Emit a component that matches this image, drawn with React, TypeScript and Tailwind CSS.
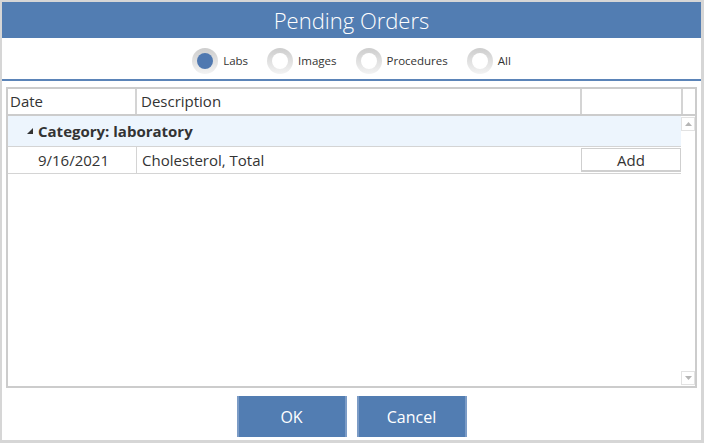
import React from "react";

const font = { fontFamily: '"Open Sans", "Noto Sans", sans-serif' };

type Filter = "Labs" | "Images" | "Procedures" | "All";

function Radio({ label, checked }: { label: Filter; checked?: boolean }) {
  return (
    <label className="flex items-center gap-[5px] text-[11.5px] text-[#333]">
      <span className="flex h-[26px] w-[26px] items-center justify-center rounded-full bg-gradient-to-b from-[#cdcdcd] to-[#f3f3f3]">
        <span
          className={`h-[16px] w-[16px] rounded-full ${
            checked ? "bg-[#4f78b0]" : "bg-white"
          }`}
        />
      </span>
      {label}
    </label>
  );
}

function ScrollArrow({ up }: { up?: boolean }) {
  return (
    <div className="flex h-[14px] w-[14px] items-center justify-center border border-[#e2e2e2] bg-white">
      <svg width="7" height="4" viewBox="0 0 7 4">
        <path d={up ? "M0 4 L3.5 0 L7 4 Z" : "M0 0 L3.5 4 L7 0 Z"} fill="#b5b5b5" />
      </svg>
    </div>
  );
}

export default function App() {
  const filters: Filter[] = ["Labs", "Images", "Procedures", "All"];
  return (
    <div
      className="h-[443px] w-[704px] border-t-2 border-l-2 border-r-[3px] border-b-[3px] border-[#d6d6d6] bg-white flex flex-col"
      style={font}
    >
      {/* Title bar */}
      <div className="flex h-[36px] items-center justify-center bg-[#527db2] text-[22px] font-light text-white">
        Pending Orders
      </div>

      {/* Filter radios */}
      <div className="flex h-[43px] items-center justify-center gap-[19px] border-b-2 border-[#5b84b8] pt-[4px]">
        {filters.map(f => (
          <Radio key={f} label={f} checked={f === "Labs"} />
        ))}
      </div>

      {/* Grid */}
      <div className="mx-[4px] mt-[6px] flex h-[301px] flex-col border-2 border-[#cccccc]">
        <div className="flex h-[27px] border-b-2 border-[#cccccc] text-[15px] text-[#333]">
          <div className="flex w-[129px] items-center border-r-2 border-[#d4d4d4] pl-[2px]">Date</div>
          <div className="flex w-[445px] items-center border-r-2 border-[#d4d4d4] pl-[4px]">Description</div>
          <div className="w-[101px] border-r-2 border-[#d4d4d4]" />
          <div className="flex-1" />
        </div>
        <div className="flex flex-1">
          <div className="flex flex-1 flex-col">
            <div className="flex h-[31px] items-center gap-[5px] border-b border-[#d4d4d4] bg-[#edf5fd] pl-[19px] text-[15px] font-bold text-[#333]">
              <svg width="6" height="6" viewBox="0 0 6 6">
                <path d="M6 0 L6 6 L0 6 Z" fill="#333" />
              </svg>
              Category: laboratory
            </div>
            <div className="flex h-[27px] border-b border-[#d4d4d4] text-[15px] text-[#333]">
              <div className="flex w-[129px] items-center justify-end border-r border-[#d4d4d4] pr-[27px]">
                9/16/2021
              </div>
              <div className="flex w-[444px] items-center pl-[5px]">Cholesterol, Total</div>
              <button className="my-[1px] w-[100px] border border-[#cfcfcf] border-b-2 bg-white text-[15px] text-[#333]">
                Add
              </button>
            </div>
          </div>
          <div className="flex w-[17px] flex-col items-center justify-between py-[1px]">
            <ScrollArrow up />
            <ScrollArrow />
          </div>
        </div>
      </div>

      {/* Footer buttons */}
      <div className="flex flex-1 items-center justify-center gap-[10px] pt-[5px]">
        <button className="h-[41px] w-[110px] border-x-2 border-[#7c9cc6] bg-[#527db2] text-[16px] text-white">
          OK
        </button>
        <button className="h-[41px] w-[110px] border-x-2 border-[#7c9cc6] bg-[#527db2] text-[16px] text-white">
          Cancel
        </button>
      </div>
    </div>
  );
}
